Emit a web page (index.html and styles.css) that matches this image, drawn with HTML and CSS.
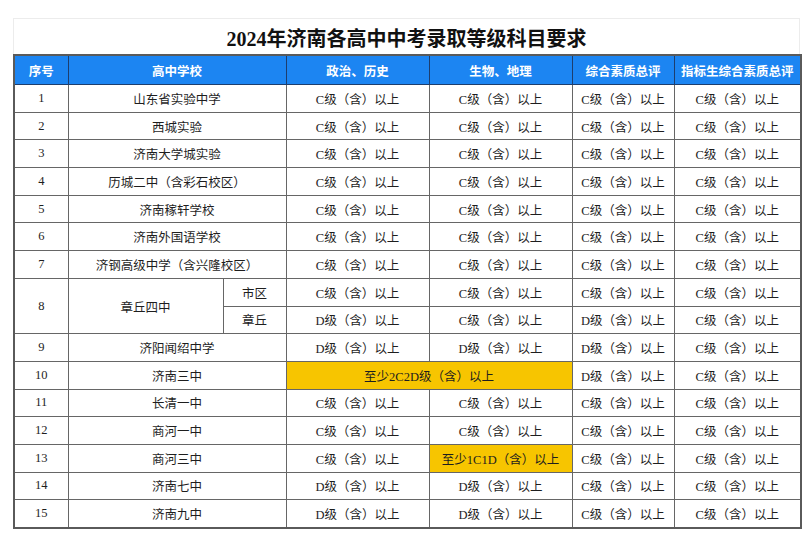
FILE: index.html
```html
<!DOCTYPE html>
<html lang="zh-CN">
<head>
<meta charset="utf-8">
<link rel="stylesheet" href="styles.css">
</head>
<body>
<div class="sheet">
  <div class="title">2024年济南各高中中考录取等级科目要求</div>
  <table class="grid">
    <colgroup>
      <col class="c-no"><col class="c-school"><col class="c-sub"><col class="c-a"><col class="c-b"><col class="c-c"><col class="c-d">
    </colgroup>
    <thead>
      <tr><th>序号</th><th colspan="2">高中学校</th><th>政治、历史</th><th>生物、地理</th><th>综合素质总评</th><th>指标生综合素质总评</th></tr>
    </thead>
    <tbody>
      <tr><td>1</td><td colspan="2">山东省实验中学</td><td>C级（含）以上</td><td>C级（含）以上</td><td>C级（含）以上</td><td>C级（含）以上</td></tr>
      <tr><td>2</td><td colspan="2">西城实验</td><td>C级（含）以上</td><td>C级（含）以上</td><td>C级（含）以上</td><td>C级（含）以上</td></tr>
      <tr><td>3</td><td colspan="2">济南大学城实验</td><td>C级（含）以上</td><td>C级（含）以上</td><td>C级（含）以上</td><td>C级（含）以上</td></tr>
      <tr><td>4</td><td colspan="2">历城二中（含彩石校区）</td><td>C级（含）以上</td><td>C级（含）以上</td><td>C级（含）以上</td><td>C级（含）以上</td></tr>
      <tr><td>5</td><td colspan="2">济南稼轩学校</td><td>C级（含）以上</td><td>C级（含）以上</td><td>C级（含）以上</td><td>C级（含）以上</td></tr>
      <tr><td>6</td><td colspan="2">济南外国语学校</td><td>C级（含）以上</td><td>C级（含）以上</td><td>C级（含）以上</td><td>C级（含）以上</td></tr>
      <tr><td>7</td><td colspan="2">济钢高级中学（含兴隆校区）</td><td>C级（含）以上</td><td>C级（含）以上</td><td>C级（含）以上</td><td>C级（含）以上</td></tr>
      <tr><td rowspan="2">8</td><td rowspan="2">章丘四中</td><td>市区</td><td>C级（含）以上</td><td>C级（含）以上</td><td>C级（含）以上</td><td>C级（含）以上</td></tr>
      <tr><td>章丘</td><td>D级（含）以上</td><td>C级（含）以上</td><td>D级（含）以上</td><td>C级（含）以上</td></tr>
      <tr><td>9</td><td colspan="2">济阳闻绍中学</td><td>D级（含）以上</td><td>D级（含）以上</td><td>D级（含）以上</td><td>C级（含）以上</td></tr>
      <tr><td>10</td><td colspan="2">济南三中</td><td colspan="2" class="hl">至少2C2D级（含）以上</td><td>D级（含）以上</td><td>C级（含）以上</td></tr>
      <tr><td>11</td><td colspan="2">长清一中</td><td>C级（含）以上</td><td>C级（含）以上</td><td>C级（含）以上</td><td>C级（含）以上</td></tr>
      <tr><td>12</td><td colspan="2">商河一中</td><td>C级（含）以上</td><td>C级（含）以上</td><td>C级（含）以上</td><td>C级（含）以上</td></tr>
      <tr><td>13</td><td colspan="2">商河三中</td><td>C级（含）以上</td><td class="hl">至少1C1D（含）以上</td><td>C级（含）以上</td><td>C级（含）以上</td></tr>
      <tr><td>14</td><td colspan="2">济南七中</td><td>D级（含）以上</td><td>D级（含）以上</td><td>C级（含）以上</td><td>C级（含）以上</td></tr>
      <tr><td>15</td><td colspan="2">济南九中</td><td>D级（含）以上</td><td>D级（含）以上</td><td>C级（含）以上</td><td>C级（含）以上</td></tr>
    </tbody>
  </table>
</div>
</body>
</html>
```

FILE: styles.css
```css
html, body {
  margin: 0;
  padding: 0;
  background: #ffffff;
}
body {
  font-family: "Liberation Serif", "Noto Sans CJK SC", serif;
  color: #1e1e1e;
}
.sheet {
  width: 787px;
  margin: 18px 0 0 13px;
}
.title {
  box-sizing: border-box;
  height: 36px;
  border: 1px solid #ececec;
  border-bottom: none;
  text-align: center;
  font-size: 20px;
  font-weight: 600;
  line-height: 40px;
  color: #111;
}
.grid {
  width: 787px;
  border-collapse: collapse;
  table-layout: fixed;
  border: 2px solid #5a5a5a;
}
.c-no { width: 54px; }
.c-school { width: 155px; }
.c-sub { width: 63px; }
.c-a { width: 143px; }
.c-b { width: 143px; }
.c-c { width: 102px; }
.c-d { width: 127px; }
.grid th {
  height: 28px;
  padding: 0;
  background: #1c85f2;
  color: #ffffff;
  font-weight: 600;
  font-size: 12.5px;
  border: 1px solid #1d3e6e;
  text-align: center;
}
.grid td {
  height: 26.7px;
  padding: 0;
  font-size: 12.5px;
  text-align: center;
  border: 1px solid #666666;
  white-space: nowrap;
}
.grid td.hl {
  background: #f7c500;
}
```
